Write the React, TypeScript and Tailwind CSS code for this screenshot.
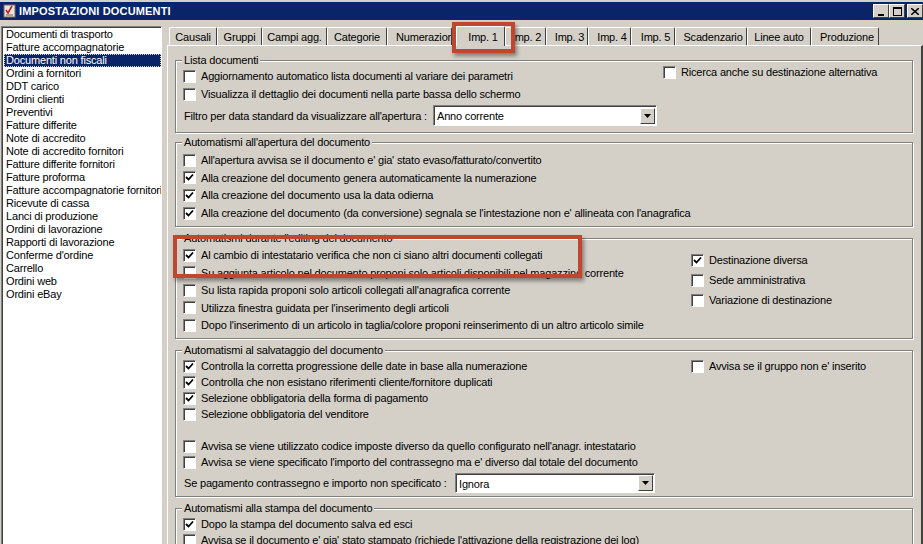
const listItems = [
  "Documenti di trasporto",
  "Fatture accompagnatorie",
  "Documenti non fiscali",
  "Ordini a fornitori",
  "DDT carico",
  "Ordini clienti",
  "Preventivi",
  "Fatture differite",
  "Note di accredito",
  "Note di accredito fornitori",
  "Fatture differite fornitori",
  "Fatture proforma",
  "Fatture accompagnatorie fornitori",
  "Ricevute di cassa",
  "Lanci di produzione",
  "Ordini di lavorazione",
  "Rapporti di lavorazione",
  "Conferme d'ordine",
  "Carrello",
  "Ordini web",
  "Ordini eBay",
];

const tabs = [
  { label: "Causali", w: "w-[48px] justify-center" },
  { label: "Gruppi", w: "w-[45px] justify-center" },
  { label: "Campi agg.", w: "w-[65px] justify-center" },
  { label: "Categorie", w: "w-[60px] justify-center" },
  { label: "Numerazione", w: "w-[65px] mr-[4px] justify-start pl-[8px]" },
  { label: "Imp. 1", w: "w-[49px] justify-center pl-[5px]", active: true },
  { label: "Imp. 2", w: "w-[41px] justify-center pl-[2px]" },
  { label: "Imp. 3", w: "w-[42px] justify-center pl-[5px]" },
  { label: "Imp. 4", w: "w-[43px] justify-center pl-[5px]" },
  { label: "Imp. 5", w: "w-[44px] justify-center pl-[5px]" },
  { label: "Scadenzario", w: "w-[72px] justify-center pl-[4px]" },
  { label: "Linee auto", w: "w-[64px] justify-center" },
  { label: "Produzione", w: "w-[68px] justify-center pl-[4px]" },
];

function Check({ label, checked }: { label: string; checked?: boolean }) {
  return (
    <div className="flex h-[16px] items-center gap-[5px] whitespace-nowrap">
      <span className="flex h-[13px] w-[13px] shrink-0 items-center justify-center border border-t-[#808080] border-l-[#808080] border-r-white border-b-white bg-white shadow-[inset_1px_1px_0_#404040]">
        {checked && (
          <svg width="9" height="9" viewBox="0 0 9 9">
            <path d="M1 4 L3.5 6.5 L8 1.5" fill="none" stroke="#000" strokeWidth="1.8" />
          </svg>
        )}
      </span>
      <span>{label}</span>
    </div>
  );
}

function Group({ title, className, children }: { title: string; className: string; children: React.ReactNode }) {
  return (
    <div className={`relative ml-[7px] mr-[8px] shrink-0 border border-[#808080] shadow-[1px_1px_0_#fff,inset_1px_1px_0_#fff] ${className}`}>
      <span className="absolute left-[6px] top-[-8px] bg-[#d4d0c8] px-[2px] leading-[14px] whitespace-nowrap">{title}</span>
      {children}
    </div>
  );
}

function Combo({ value, className }: { value: string; className: string }) {
  return (
    <div className={`flex items-center border border-t-[#808080] border-l-[#808080] border-r-white border-b-white bg-white shadow-[inset_1px_1px_0_#404040] ${className}`}>
      <span className="flex-1 pl-[3px] pt-px">{value}</span>
      <span className="mr-px flex h-[16px] w-[15px] items-center justify-center border border-t-white border-l-white border-r-[#404040] border-b-[#404040] bg-[#d4d0c8]">
        <svg width="7" height="4" viewBox="0 0 7 4">
          <path d="M0 0 H7 L3.5 4 Z" fill="#000" />
        </svg>
      </span>
    </div>
  );
}

function CaptionButton({ children }: { children: React.ReactNode }) {
  return (
    <span className="flex h-[14px] w-[16px] items-center justify-center border border-t-white border-l-white border-r-[#404040] border-b-[#404040] bg-[#d4d0c8]">
      {children}
    </span>
  );
}

export default function App() {
  return (
    <div
      className="flex h-[544px] w-[923px] flex-col overflow-hidden bg-[#d4d0c8] text-[11px] leading-[14px] tracking-[-0.18px] text-black"
      style={{ fontFamily: '"Liberation Sans", Arial, sans-serif' }}
    >
      <div className="h-[2px] shrink-0 bg-[#d4d0c8]" />
      {/* barra del titolo */}
      <div className="flex h-[18px] shrink-0 items-center bg-[#0a246a] pl-[3px]">
        <svg width="14" height="14" viewBox="0 0 14 14" className="shrink-0">
          <rect x="1" y="1" width="11" height="12" fill="#e8e4dc" stroke="#7a6a5a" />
          <path d="M3 6 L5 9 L9 2" fill="none" stroke="#c02020" strokeWidth="1.6" />
          <path d="M3 11 H10" stroke="#805050" />
        </svg>
        <span className="ml-[2px] flex-1 text-[11px] font-bold tracking-[0.16px] text-white">IMPOSTAZIONI DOCUMENTI</span>
        <div className="flex">
          <CaptionButton>
            <span className="mt-[7px] h-[2px] w-[6px] bg-black" />
          </CaptionButton>
          <CaptionButton>
            <span className="h-[9px] w-[9px] border border-t-2 border-black" />
          </CaptionButton>
          <span className="ml-[2px]">
            <CaptionButton>
              <svg width="8" height="7" viewBox="0 0 8 7">
                <path d="M0 0 L8 7 M8 0 L0 7" stroke="#000" strokeWidth="1.5" />
              </svg>
            </CaptionButton>
          </span>
        </div>
      </div>

      <div className="flex min-h-0 flex-1 pt-[6px]">
        {/* lista documenti */}
        <div className="ml-px h-[530px] w-[161px] shrink-0 overflow-hidden border border-t-[#808080] border-l-[#808080] border-r-white border-b-white bg-white pl-[2px] pt-px shadow-[inset_1px_1px_0_#404040]">
          {listItems.map((item, i) => (
            <div
              key={item}
              className={`h-[13px] whitespace-nowrap pl-[2px] text-[11px] leading-[13px] ${
                i === 2 ? "bg-[#0a246a] text-white outline-1 -outline-offset-1 outline-dotted outline-[#d4d0c8]" : ""
              }`}
            >
              {item}
            </div>
          ))}
        </div>

        {/* pannello schede */}
        <div className="relative ml-[5px] min-w-0 flex-1">
          <div className="flex h-[19px] items-end pl-[2px]">
            {tabs.map((t) => (
              <div
                key={t.label}
                className={`flex shrink-0 items-center overflow-hidden whitespace-nowrap rounded-t-[2px] border-t border-l border-white border-r border-r-[#404040] ${t.w} ${
                  t.active ? "relative z-10 -mb-px h-[20px] bg-[#d4d0c8]" : "h-[18px]"
                }`}
              >
                {t.label}
              </div>
            ))}
          </div>
          <div className="flex h-[530px] flex-col border-t border-l border-white border-r-2 border-r-[#404040] pt-[14px]">
            <Group title="Lista documenti" className="h-[73px] pt-[7px]">
              <div className="flex">
                <div className="ml-[7px] flex w-[480px] shrink-0 flex-col gap-[2px]">
                  <Check label="Aggiornamento automatico lista documenti al variare dei parametri" />
                  <Check label="Visualizza il dettaglio dei documenti nella parte bassa dello schermo" />
                </div>
                <div className="-mt-[4px]">
                  <Check label="Ricerca anche su destinazione alternativa" />
                </div>
              </div>
              <div className="ml-[8px] mt-[3px] flex items-center whitespace-nowrap">
                <span className="w-[249px]">Filtro per data standard da visualizzare all'apertura :</span>
                <Combo value="Anno corrente" className="h-[21px] w-[224px]" />
              </div>
            </Group>

            <Group title="Automatismi all'apertura del documento" className="mt-[9px] h-[85px] pt-[9px]">
              <div className="ml-[7px] flex flex-col gap-[1.7px]">
                <Check label="All'apertura avvisa se il documento e' gia' stato evaso/fatturato/convertito" />
                <Check checked label="Alla creazione del documento genera automaticamente la numerazione" />
                <Check checked label="Alla creazione del documento usa la data odierna" />
                <Check checked label="Alla creazione del documento (da conversione) segnala se l'intestazione non e' allineata con l'anagrafica" />
              </div>
            </Group>

            <Group title="Automatismi durante l'editing del documento" className="mt-[11px] h-[101px] pt-[8px]">
              <div className="flex">
                <div className="ml-[7px] flex w-[508px] shrink-0 flex-col gap-[1.5px]">
                  <Check checked label="Al cambio di intestatario verifica che non ci siano altri documenti collegati" />
                  <Check label="Su aggiunta articolo nel documento proponi solo articoli disponibili nel magazzino corrente" />
                  <Check label="Su lista rapida proponi solo articoli collegati all'anagrafica corrente" />
                  <Check label="Utilizza finestra guidata per l'inserimento degli articoli" />
                  <Check label="Dopo l'inserimento di un articolo in taglia/colore proponi reinserimento di un altro articolo simile" />
                </div>
                <div className="mt-[5px] flex flex-col gap-[4px]">
                  <Check checked label="Destinazione diversa" />
                  <Check label="Sede amministrativa" />
                  <Check label="Variazione di destinazione" />
                </div>
              </div>
            </Group>

            <Group title="Automatismi al salvataggio del documento" className="mt-[11px] h-[147px] pt-[7px]">
              <div className="flex">
                <div className="ml-[7px] flex w-[508px] shrink-0 flex-col">
                  <Check checked label="Controlla la corretta progressione delle date in base alla numerazione" />
                  <Check checked label="Controlla che non esistano riferimenti cliente/fornitore duplicati" />
                  <Check checked label="Selezione obbligatoria della forma di pagamento" />
                  <Check label="Selezione obbligatoria del venditore" />
                </div>
                <Check label="Avvisa se il gruppo non e' inserito" />
              </div>
              <div className="ml-[7px] mt-[16px] flex flex-col">
                <Check label="Avvisa se viene utilizzato codice imposte diverso da quello configurato nell'anagr. intestatario" />
                <Check label="Avvisa se viene specificato l'importo del contrassegno ma e' diverso dal totale del documento" />
              </div>
              <div className="ml-[8px] mt-[3px] flex items-center whitespace-nowrap">
                <span className="w-[271px]">Se pagamento contrassegno e importo non specificato :</span>
                <Combo value="Ignora" className="h-[20px] w-[200px]" />
              </div>
            </Group>

            <Group title="Automatismi alla stampa del documento" className="mt-[11px] h-[80px] pt-[7px]">
              <div className="ml-[7px] flex flex-col">
                <Check checked label="Dopo la stampa del documento salva ed esci" />
                <Check label="Avvisa se il documento e' gia' stato stampato (richiede l'attivazione della registrazione dei log)" />
              </div>
            </Group>
          </div>

          {/* evidenziazioni rosse */}
          <div className="absolute left-[285px] top-[-4px] z-20 h-[31px] w-[63px] border-4 border-[#c0462f] shadow-[2px_3px_4px_rgba(0,0,0,0.4)]" />
          <div className="absolute left-[6px] top-[209px] z-20 h-[43px] w-[409px] border-4 border-[#c0462f] shadow-[2px_3px_4px_rgba(0,0,0,0.4)]" />
        </div>
      </div>
    </div>
  );
}
